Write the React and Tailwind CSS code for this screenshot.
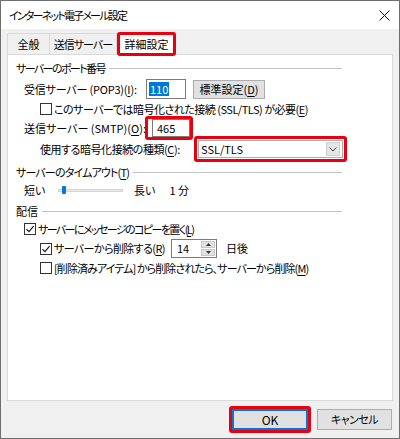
import React from "react";

function Box({ checked }) {
  return (
    <span className="w-[12px] h-[12px] border border-[#333333] bg-white flex items-center justify-center shrink-0">
      {checked && (
        <svg width="10" height="10" viewBox="0 0 10 10">
          <path d="M1.5 5.2 L4 7.6 L8.6 2.2" fill="none" stroke="#222" strokeWidth="1.3" />
        </svg>
      )}
    </span>
  );
}

function U({ children }) {
  return <span className="underline underline-offset-2">{children}</span>;
}

function Group({ children, className }) {
  return (
    <div className="flex items-center h-[16px] w-[326px] gap-[4px]">
      <span className={"whitespace-nowrap " + className}>{children}</span>
      <span className="flex-1 h-px bg-[#c4c4c4]" />
    </div>
  );
}

function Red({ className }) {
  return <span className={"absolute border-[3px] border-[#e8000f] rounded-[3px] pointer-events-none " + className} />;
}

export default function App() {
  return (
    <div className="w-[400px] h-[439px] bg-[#f0f0f0] border border-[#6e6e6e] flex flex-col text-[11px] leading-none text-black font-['Noto_Sans_CJK_JP',sans-serif] [font-feature-settings:'palt'] overflow-hidden">
      {/* title bar */}
      <div className="h-[28px] bg-white flex items-center justify-between pl-[8px] pr-[9px] shrink-0">
        <span className="text-[11px] tracking-[-1.8px]">インターネット電子メール設定</span>
        <svg width="11" height="11" viewBox="0 0 11 11">
          <path d="M0.5 0.5 L10.5 10.5 M10.5 0.5 L0.5 10.5" stroke="#111" strokeWidth="1" />
        </svg>
      </div>

      {/* tabs */}
      <div className="h-[25px] flex items-end pl-[6px] shrink-0">
        <div className="w-[43px] h-[21px] border border-b-0 border-[#d9d9d9] flex items-center justify-center">全般</div>
        <div className="w-[67px] h-[21px] border border-b-0 border-l-0 border-[#d9d9d9] flex items-center justify-center tracking-[-1px]">送信サーバー</div>
        <div className="relative w-[59px] h-[23px] -mb-px bg-white border border-b-0 border-[#d9d9d9] flex items-center justify-center z-10">
          詳細設定
          <Red className="-inset-x-[1px] -top-[1px] -bottom-[1px]" />
        </div>
      </div>

      {/* panel */}
      <div className="mx-[6px] h-[347px] bg-white border border-[#d9d9d9] pl-[8px] pt-[5px] flex flex-col shrink-0">
        <Group className="tracking-[-1.6px]">サーバーのポート番号</Group>

        <div className="mt-[3px] h-[20px] flex items-center pl-[8px]">
          <span className="w-[122px] whitespace-nowrap tracking-[-0.2px]">受信サーバー (POP3)(<U>I</U>):</span>
          <span className="w-[40px] h-[20px] border border-[#7a7a7a] flex items-center pl-[2px]">
            <span className="bg-[#0078d7] text-white px-[1px] h-[14px] flex items-center">110</span>
          </span>
          <span className="ml-[7px] w-[72px] h-[19px] bg-[#e1e1e1] border border-[#adadad] flex items-center justify-center whitespace-nowrap">標準設定(<U>D</U>)</span>
        </div>

        <div className="mt-[2px] h-[16px] flex items-center pl-[24px] gap-[2px]">
          <Box />
          <span className="whitespace-nowrap tracking-[-0.5px]">このサーバーでは暗号化された接続 (SSL/TLS) が必要(<U>E</U>)</span>
        </div>

        <div className="mt-[1px] h-[20px] flex items-center pl-[8px]">
          <span className="w-[128px] whitespace-nowrap">送信サーバー (SMTP)(<U>O</U>):</span>
          <span className="relative w-[38px] h-[18px] border border-[#7a7a7a] flex items-center pl-[4px]">
            465
            <Red className="-top-[4px] -bottom-[4px] -left-[8px] -right-[4px]" />
          </span>
        </div>

        <div className="mt-[2px] h-[18px] flex items-center pl-[24px]">
          <span className="w-[158px] whitespace-nowrap tracking-[-0.45px]">使用する暗号化接続の種類(<U>C</U>):</span>
          <span className="relative w-[145px] h-[18px] border border-[#adadad] bg-white flex items-center justify-between pl-[2px] pr-[2px]">
            <span>SSL/TLS</span>
            <span className="w-[14px] h-[14px] bg-[#e5e5e5] border border-[#d0d0d0] flex items-center justify-center">
              <svg width="8" height="5" viewBox="0 0 8 5">
                <path d="M0.5 0.5 L4 4 L7.5 0.5" fill="none" stroke="#444" strokeWidth="1" />
              </svg>
            </span>
            <Red className="-inset-[5px]" />
          </span>
        </div>

        <div className="mt-[6px]">
          <Group className="tracking-[-0.85px]">サーバーのタイムアウト(<U>T</U>)</Group>
        </div>

        <div className="mt-[2px] h-[16px] flex items-center pl-[8px]">
          <span className="w-[34px]">短い</span>
          <span className="relative w-[65px] h-[3px] bg-[#e7e7e7] border border-[#d6d6d6]">
            <span className="absolute left-[3px] -top-[4px] w-[4px] h-[8px] bg-[#0078d7] rounded-[1px]" />
          </span>
          <span className="ml-[11px]">長い</span>
          <span className="ml-[14px]">1 分</span>
        </div>

        <div className="mt-[5px]">
          <Group>配信</Group>
        </div>

        <div className="mt-[2px] h-[16px] flex items-center pl-[8px] gap-[2px]">
          <Box checked />
          <span className="whitespace-nowrap tracking-[-1.6px]">サーバーにメッセージのコピーを置く(<U>L</U>)</span>
        </div>

        <div className="mt-[2px] h-[19px] flex items-center pl-[24px]">
          <Box checked />
          <span className="ml-[2px] w-[117px] whitespace-nowrap tracking-[-0.6px]">サーバーから削除する(<U>R</U>)</span>
          <span className="w-[46px] h-[19px] border border-[#7a7a7a] flex items-center justify-between pl-[5px] pr-[1px]">
            <span>14</span>
            <span className="w-[14px] h-[15px] flex flex-col gap-px">
              <span className="flex-1 bg-[#e1e1e1] border border-[#c8c8c8] flex items-center justify-center">
                <svg width="5" height="3" viewBox="0 0 5 3"><path d="M0 3 L2.5 0 L5 3Z" fill="#333" /></svg>
              </span>
              <span className="flex-1 bg-[#e1e1e1] border border-[#c8c8c8] flex items-center justify-center">
                <svg width="5" height="3" viewBox="0 0 5 3"><path d="M0 0 L2.5 3 L5 0Z" fill="#333" /></svg>
              </span>
            </span>
          </span>
          <span className="ml-[9px]">日後</span>
        </div>

        <div className="mt-[2px] h-[16px] flex items-center pl-[24px] gap-[2px]">
          <Box />
          <span className="whitespace-nowrap tracking-[-0.9px]">[削除済みアイテム] から削除されたら、サーバーから削除(<U>M</U>)</span>
        </div>
      </div>

      {/* buttons */}
      <div className="flex-1 flex justify-end items-start pt-[8px] pr-[7px]">
        <span className="relative w-[76px] h-[21px] bg-[#e1e1e1] border border-[#0078d7] shadow-[inset_0_0_0_1px_#0078d7] flex items-center justify-center text-[12px]">
          OK
          <Red className="-inset-[4px]" />
        </span>
        <span className="ml-[9px] w-[75px] h-[21px] bg-[#e1e1e1] border border-[#adadad] flex items-center justify-center tracking-[-0.5px]">キャンセル</span>
      </div>
    </div>
  );
}
